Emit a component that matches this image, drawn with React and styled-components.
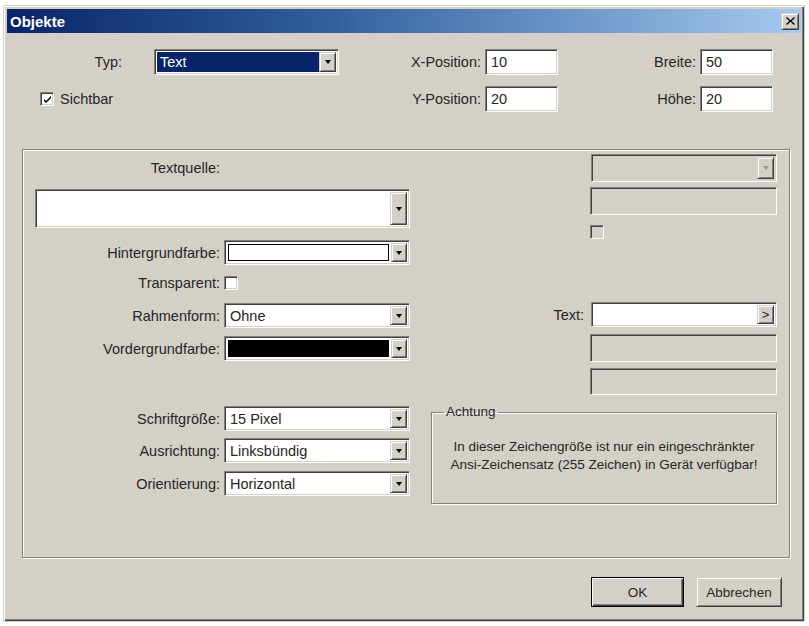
import React from "react";
import styled, { createGlobalStyle } from "styled-components";

const GlobalStyle = createGlobalStyle`
  html, body {
    margin: 0;
    padding: 0;
    background: #ffffff;
  }
  body {
    font-family: "Liberation Sans", Arial, sans-serif;
    font-size: 14.5px;
    color: #262626;
  }
  * {
    box-sizing: border-box;
  }
`;

const sunken = `
  border-top: 1px solid #808080;
  border-left: 1px solid #808080;
  border-bottom: 1px solid #ffffff;
  border-right: 1px solid #ffffff;
  box-shadow: inset 1px 1px #404040, inset -1px -1px #d4d0c8;
`;

const raised = `
  background: #d4d0c8;
  border-top: 1px solid #d4d0c8;
  border-left: 1px solid #d4d0c8;
  border-bottom: 1px solid #404040;
  border-right: 1px solid #404040;
  box-shadow: inset 1px 1px #ffffff, inset -1px -1px #808080;
`;

const Window = styled.div`
  margin: 5px 4px 0 3px;
  width: 802px;
  height: 617px;
  padding: 3px;
  background: #d4d0c8;
  border: 1px solid #d4d0c8;
  box-shadow: inset 1px 1px #ffffff, inset -1px -1px #404040,
    inset -2px -2px #808080;
  display: flex;
  flex-direction: column;
`;

const TitleBar = styled.div`
  height: 24px;
  display: flex;
  align-items: center;
  justify-content: space-between;
  padding: 0 2px 0 3px;
  background: linear-gradient(90deg, #0a246a 0%, #2f5f9c 40%, #a6caf0 100%);
`;

const Title = styled.span`
  color: #ffffff;
  font-weight: bold;
  font-size: 15px;
`;

const CloseButton = styled.div`
  ${raised};
  width: 18px;
  height: 17px;
  display: flex;
  align-items: center;
  justify-content: center;
`;

const TopGrid = styled.div`
  display: grid;
  grid-template-columns: 147px 185px 146px 73px 142px 73px;
  grid-template-rows: 26px 26px;
  row-gap: 11px;
  padding-top: 16px;
  align-items: center;
`;

const Label = styled.label`
  text-align: right;
  padding-right: ${(p) => p.$pad ?? 4}px;
  white-space: nowrap;
`;

const TextInput = styled.div`
  ${sunken};
  background: ${(p) => (p.$disabled ? "#d4d0c8" : "#ffffff")};
  width: ${(p) => p.$w ?? 73}px;
  height: ${(p) => p.$h ?? 26}px;
  padding: 3px 5px;
  line-height: 18px;
`;

const ComboFrame = styled.div`
  ${sunken};
  width: ${(p) => p.$w}px;
  height: ${(p) => p.$h ?? 25}px;
  padding: 2px;
  display: flex;
  background: ${(p) => (p.$disabled ? "#d4d0c8" : "#ffffff")};
`;

const ComboValue = styled.div`
  flex: 1;
  display: flex;
  align-items: center;
  padding-left: ${(p) => (p.$swatch ? 0 : 3)}px;
  margin: ${(p) => (p.$swatch ? "1px 2px 1px 1px" : "0")};
  background: ${(p) => p.$bg ?? "transparent"};
  color: ${(p) => (p.$selected ? "#ffffff" : "#262626")};
  border: ${(p) => (p.$swatch ? "1px solid #000" : "none")};
`;

const DropButton = styled.div`
  ${raised};
  width: ${(p) => p.$w ?? 17}px;
  display: flex;
  align-items: center;
  justify-content: center;
  font-size: 13px;
  color: #222;
`;

const Arrow = styled.span`
  width: 0;
  height: 0;
  border-left: 3.5px solid transparent;
  border-right: 3.5px solid transparent;
  border-top: 4px solid ${(p) => (p.$disabled ? "#9a978f" : "#000")};
`;

const CheckRow = styled.div`
  display: flex;
  align-items: center;
  gap: 6px;
  margin-left: ${(p) => p.$indent ?? 0}px;
`;

const CheckBox = styled.div`
  ${sunken};
  width: 14px;
  height: 14px;
  background: ${(p) => (p.$disabled ? "#d4d0c8" : "#ffffff")};
  display: flex;
  align-items: center;
  justify-content: center;
`;

const Group = styled.div`
  margin: 37px 0 0 15px;
  width: 768px;
  height: 409px;
  border: 1px solid #808080;
  box-shadow: inset 1px 1px #ffffff, 1px 1px #ffffff;
  padding: 1px 0 0 12px;
  display: grid;
  grid-template-columns: 375px 346px;
  column-gap: 21px;
`;

const Column = styled.div`
  display: flex;
  flex-direction: column;
  align-items: ${(p) => (p.$right ? "flex-end" : "stretch")};
`;

const FieldRow = styled.div`
  display: grid;
  grid-template-columns: 189px 186px;
  align-items: center;
  margin-top: ${(p) => p.$top}px;
  height: ${(p) => p.$h ?? 25}px;
`;

const Spaced = styled.div`
  margin-top: ${(p) => p.$top}px;
  align-self: ${(p) => p.$align ?? "auto"};
`;

const TextRow = styled.div`
  display: flex;
  align-items: center;
  gap: 7px;
  margin-top: ${(p) => p.$top}px;
`;

const Notice = styled.fieldset`
  margin: 9px 0 0 0;
  width: 346px;
  height: 100px;
  padding: 18px 6px 0;
  border: 1px solid #808080;
  box-shadow: inset 1px 1px #ffffff, 1px 1px #ffffff;
  align-self: stretch;
`;

const Legend = styled.legend`
  padding: 0 2px;
  margin-left: 6px;
  line-height: 16px;
  font-size: 13.5px;
`;

const NoticeText = styled.p`
  margin: 0;
  text-align: center;
  line-height: 18px;
  font-size: 13.5px;
`;

const ButtonRow = styled.div`
  display: flex;
  justify-content: flex-end;
  gap: 12px;
  margin-top: 19px;
  padding-right: 19px;
`;

const Button = styled.button`
  ${raised};
  font: inherit;
  font-size: 13.5px;
  color: #262626;
  width: ${(p) => p.$w}px;
  height: 30px;
  ${(p) =>
    p.$default &&
    `
    border: 1px solid #000;
    box-shadow: inset 1px 1px #ffffff, inset -1px -1px #404040, inset -2px -2px #808080;
  `}
`;

const Check = () => (
  <svg width="9" height="9" viewBox="0 0 9 9">
    <path d="M1 4 L3 6 L8 1 L8 3 L3 8 L1 6 Z" fill="#000" />
  </svg>
);

const Combo = ({ w, h, value, bg, selected, disabled, swatch, btnW }) => (
  <ComboFrame $w={w} $h={h} $disabled={disabled}>
    <ComboValue $bg={bg} $selected={selected} $swatch={swatch}>
      {value}
    </ComboValue>
    <DropButton $w={btnW}>
      <Arrow $disabled={disabled} />
    </DropButton>
  </ComboFrame>
);

const App = () => {
  return (
    <>
      <GlobalStyle />
      <Window>
        <TitleBar>
          <Title>Objekte</Title>
          <CloseButton>
            <svg width="9" height="8" viewBox="0 0 9 8">
              <path
                d="M1 0 L4.5 3.3 L8 0 L9 1 L5.6 4 L9 7 L8 8 L4.5 4.8 L1 8 L0 7 L3.4 4 L0 1 Z"
                fill="#000"
              />
            </svg>
          </CloseButton>
        </TitleBar>

        <TopGrid>
          <Label $pad={32}>Typ:</Label>
          <Combo w={185} h={26} value="Text" bg="#0a246a" selected />
          <Label>X-Position:</Label>
          <TextInput>10</TextInput>
          <Label>Breite:</Label>
          <TextInput>50</TextInput>

          <CheckRow $indent={33}>
            <CheckBox>
              <Check />
            </CheckBox>
            <span>Sichtbar</span>
          </CheckRow>
          <div />
          <Label>Y-Position:</Label>
          <TextInput>20</TextInput>
          <Label>Höhe:</Label>
          <TextInput>20</TextInput>
        </TopGrid>

        <Group>
          <Column>
            <FieldRow $top={9} $h={16}>
              <Label>Textquelle:</Label>
            </FieldRow>
            <Spaced $top={13}>
              <Combo w={375} h={39} />
            </Spaced>
            <FieldRow $top={12}>
              <Label>Hintergrundfarbe:</Label>
              <Combo w={186} bg="#ffffff" swatch btnW={16} />
            </FieldRow>
            <FieldRow $top={10} $h={16}>
              <Label>Transparent:</Label>
              <CheckBox />
            </FieldRow>
            <FieldRow $top={12}>
              <Label>Rahmenform:</Label>
              <Combo w={186} value="Ohne" />
            </FieldRow>
            <FieldRow $top={8}>
              <Label>Vordergrundfarbe:</Label>
              <Combo w={186} bg="#000000" swatch btnW={16} />
            </FieldRow>
            <FieldRow $top={45}>
              <Label>Schriftgröße:</Label>
              <Combo w={186} value="15 Pixel" />
            </FieldRow>
            <FieldRow $top={7}>
              <Label>Ausrichtung:</Label>
              <Combo w={186} value="Linksbündig" />
            </FieldRow>
            <FieldRow $top={8}>
              <Label>Orientierung:</Label>
              <Combo w={186} value="Horizontal" />
            </FieldRow>
          </Column>

          <Column $right>
            <Spaced $top={3}>
              <Combo w={186} h={28} disabled />
            </Spaced>
            <Spaced $top={5}>
              <TextInput $disabled $w={187} $h={28} />
            </Spaced>
            <Spaced $top={10} $align="flex-start">
              <CheckRow $indent={159}>
                <CheckBox $disabled />
              </CheckRow>
            </Spaced>
            <TextRow $top={63}>
              <Label $pad={0}>Text:</Label>
              <ComboFrame $w={186}>
                <ComboValue />
                <DropButton>&gt;</DropButton>
              </ComboFrame>
            </TextRow>
            <Spaced $top={7}>
              <TextInput $disabled $w={187} $h={28} />
            </Spaced>
            <Spaced $top={6}>
              <TextInput $disabled $w={187} $h={27} />
            </Spaced>
            <Notice>
              <Legend>Achtung</Legend>
              <NoticeText>
                In dieser Zeichengröße ist nur ein eingeschränkter
                <br />
                Ansi-Zeichensatz (255 Zeichen) in Gerät verfügbar!
              </NoticeText>
            </Notice>
          </Column>
        </Group>

        <ButtonRow>
          <Button $w={93} $default>
            OK
          </Button>
          <Button $w={86}>Abbrechen</Button>
        </ButtonRow>
      </Window>
    </>
  );
};

export default App;
